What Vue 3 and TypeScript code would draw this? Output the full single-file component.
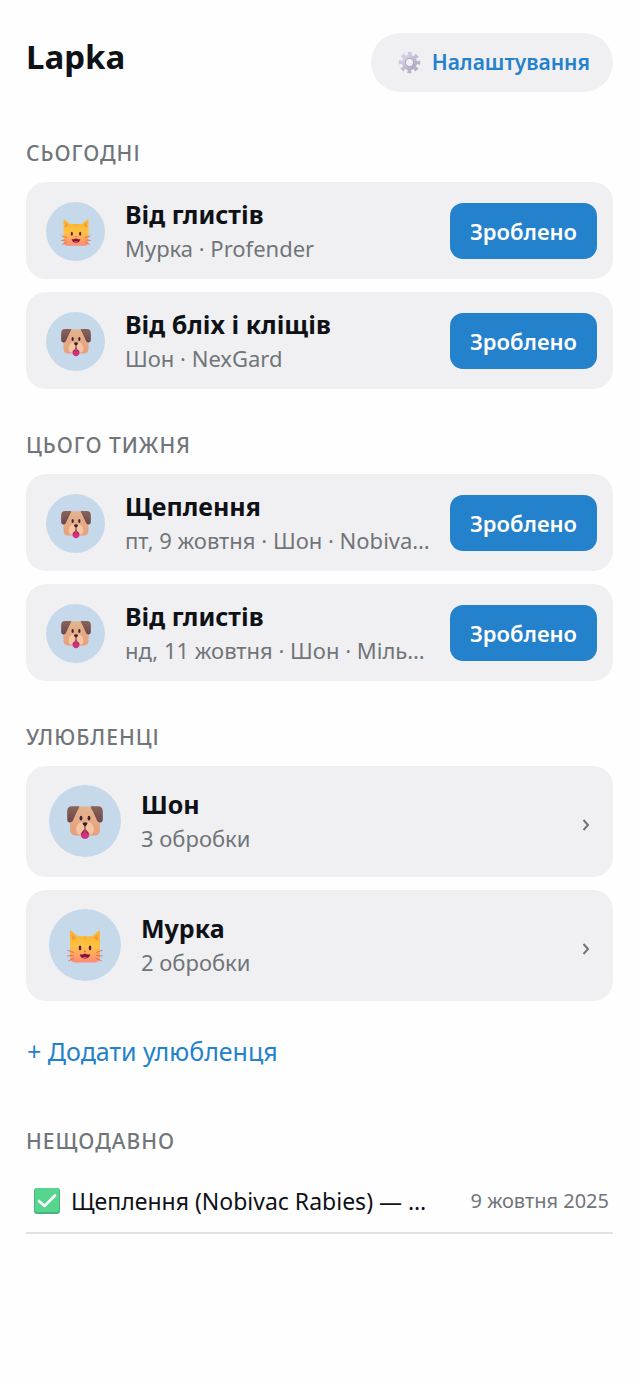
<script setup lang="ts">
type Species = 'cat' | 'dog'

interface Task {
  id: number
  species: Species
  title: string
  details: string
}

interface TaskGroup {
  id: string
  heading: string
  tasks: Task[]
}

interface Pet {
  id: number
  species: Species
  name: string
  summary: string
}

const groups: TaskGroup[] = [
  {
    id: 'today',
    heading: 'Сьогодні',
    tasks: [
      { id: 1, species: 'cat', title: 'Від глистів', details: 'Мурка · Profender' },
      { id: 2, species: 'dog', title: 'Від бліх і кліщів', details: 'Шон · NexGard' },
    ],
  },
  {
    id: 'week',
    heading: 'Цього тижня',
    tasks: [
      { id: 3, species: 'dog', title: 'Щеплення', details: 'пт, 9 жовтня · Шон · Nobivac Rabies' },
      { id: 4, species: 'dog', title: 'Від глистів', details: 'нд, 11 жовтня · Шон · Мільпразон' },
    ],
  },
]

const pets: Pet[] = [
  { id: 1, species: 'dog', name: 'Шон', summary: '3 обробки' },
  { id: 2, species: 'cat', name: 'Мурка', summary: '2 обробки' },
]
</script>

<template>
  <main class="page">
    <svg class="sprites" aria-hidden="true">
      <defs>
        <linearGradient id="catFur" x1="0" y1="0" x2="0" y2="1">
          <stop offset="0" stop-color="#fbb52c" />
          <stop offset="0.5" stop-color="#fec044" />
          <stop offset="1" stop-color="#ff8a78" />
        </linearGradient>
        <linearGradient id="dogFur" x1="0" y1="0" x2="0" y2="1">
          <stop offset="0" stop-color="#e3b48e" />
          <stop offset="1" stop-color="#e5a07c" />
        </linearGradient>
        <linearGradient id="dogEar" x1="0" y1="0" x2="0" y2="1">
          <stop offset="0" stop-color="#8a6458" />
          <stop offset="1" stop-color="#6b474c" />
        </linearGradient>
        <linearGradient id="gearMetal" x1="0" y1="0" x2="1" y2="1">
          <stop offset="0" stop-color="#d9d2e6" />
          <stop offset="1" stop-color="#b3a6c5" />
        </linearGradient>
        <symbol id="cat" viewBox="0 0 36 36">
          <path d="M3 2.6Q3.2 1 4.6 2L11 7.2H25L31.4 2Q32.8 1 33 2.6V28.5Q33 33.4 28 33.4H8Q3 33.4 3 28.5Z" fill="url(#catFur)" />
          <path d="M4.8 5L9.4 8.8L4.8 12ZM31.2 5L26.6 8.8L31.2 12Z" fill="#f69a3a" />
          <path d="M15.4 7.2H20.6L18 11.6Z" fill="#f4a329" opacity="0.4" />
          <ellipse cx="13" cy="19" rx="1.3" ry="2.4" fill="#4b2838" />
          <ellipse cx="23" cy="19" rx="1.3" ry="2.4" fill="#4b2838" />
          <path d="M16.6 21.8H19.4L18 23.2Z" fill="#ef496c" />
          <path d="M12.8 25.2Q15.4 26 18 24.6Q20.6 26 23.2 25.2Q22.6 29.6 18 29.6T12.8 25.2Z" fill="#7a183c" />
          <path d="M15.4 28.4Q18 27 20.6 28.4Q18 30.2 15.4 28.4Z" fill="#ef3f63" />
          <path d="M0.8 21.4L6.5 23.4M0.6 27L6.5 26.4M1.6 31.8L7 29.2M35.2 21.4L29.5 23.4M35.4 27L29.5 26.4M34.4 31.8L29 29.2" fill="none" stroke="#c9685a" stroke-width="0.8" stroke-linecap="round" />
        </symbol>
        <symbol id="dog" viewBox="0 0 36 36">
          <path d="M8 1.4H28L33 10V24.5Q33 30.6 27 30.6H9Q3 30.6 3 24.5V10Z" fill="url(#dogFur)" />
          <path d="M5 1.2H12.4Q12 3.4 10 6.6L6.6 14Q5.6 17.4 3 17.4Q0.2 17.4 0.2 14.4V6.4Q0.2 1.2 5 1.2Z" fill="url(#dogEar)" />
          <path d="M31 1.2H23.6Q24 3.4 26 6.6L29.4 14Q30.4 17.4 33 17.4Q35.8 17.4 35.8 14.4V6.4Q35.8 1.2 31 1.2Z" fill="url(#dogEar)" />
          <path d="M18 17Q23 15.8 26 20.4Q29 29.6 22 29.8Q19 29.8 18 27.6Q17 29.8 14 29.8Q7 29.6 10 20.4Q13 15.8 18 17Z" fill="#f6c4a2" />
          <ellipse cx="14" cy="13.2" rx="1.4" ry="2.4" fill="#422534" />
          <ellipse cx="22" cy="13.2" rx="1.4" ry="2.4" fill="#422534" />
          <path d="M13.8 28.4Q15.4 25.4 18 26Q20.6 25.4 22.2 28.4V30.4Q21.4 33.8 18 33.8T13.8 30.4Z" fill="#d2307f" />
          <path d="M15.4 17.8Q18 16.6 20.6 17.8Q20.4 20 18 21.4Q15.6 20 15.4 17.8Z" fill="#3c1f2c" />
          <path d="M18 21V25M18 24.6Q16.6 25.4 15 28.2M18 24.6Q19.4 25.4 21 28.2" fill="none" stroke="#6b2a3a" stroke-width="1.1" stroke-linecap="round" />
        </symbol>
        <symbol id="gear" viewBox="0 0 24 24">
          <g fill="none" stroke="url(#gearMetal)">
            <circle cx="12" cy="12" r="5.9" stroke-width="4.2" />
            <circle cx="12" cy="12" r="9.4" stroke-width="3.6" stroke-dasharray="4 3.38" stroke-dashoffset="2" />
          </g>
          <circle cx="12" cy="12" r="4.2" fill="none" stroke="#aa9dbc" stroke-width="0.8" />
        </symbol>
      </defs>
    </svg>

    <header class="header">
      <h1 class="brand">Lapka</h1>
      <button class="settings" type="button">
        <svg class="gear" aria-hidden="true"><use href="#gear" /></svg>
        <span>Налаштування</span>
      </button>
    </header>

    <section v-for="group in groups" :key="group.id" class="section">
      <h2 class="heading">{{ group.heading }}</h2>
      <ul class="list">
        <li v-for="task in group.tasks" :key="task.id" class="card task">
          <span class="avatar">
            <svg class="face" aria-hidden="true"><use :href="`#${task.species}`" /></svg>
          </span>
          <div class="info">
            <h3 class="title">{{ task.title }}</h3>
            <p class="details">{{ task.details }}</p>
          </div>
          <button class="done" type="button">Зроблено</button>
        </li>
      </ul>
    </section>

    <section class="section">
      <h2 class="heading">Улюбленці</h2>
      <ul class="list">
        <li v-for="pet in pets" :key="pet.id">
          <a class="card pet" href="#">
            <span class="avatar large">
              <svg class="face" aria-hidden="true"><use :href="`#${pet.species}`" /></svg>
            </span>
            <span class="info">
              <span class="title">{{ pet.name }}</span>
              <span class="details">{{ pet.summary }}</span>
            </span>
            <svg class="chevron" viewBox="0 0 8 12" aria-hidden="true">
              <path d="M1.5 1L6 6L1.5 11" />
            </svg>
          </a>
        </li>
      </ul>
      <button class="add" type="button">+ Додати улюбленця</button>
    </section>

    <section class="section recent">
      <h2 class="heading">Нещодавно</h2>
      <ul class="history">
        <li class="entry">
          <svg class="check" viewBox="0 0 26 26" aria-hidden="true">
            <rect width="26" height="26" rx="3" fill="#48b57b" />
            <rect x="1" width="24" height="24" rx="2" fill="#55d58d" />
            <path d="M5 13L10.5 18L21 7.5" fill="none" stroke="#fff" stroke-width="2.6" stroke-linecap="round" stroke-linejoin="round" />
          </svg>
          <span class="entry-title">Щеплення (Nobivac Rabies) — Шон</span>
          <time class="entry-date" datetime="2025-10-09">9 жовтня 2025</time>
        </li>
      </ul>
    </section>
  </main>
</template>

<style>
body {
  background: #fefefe;
}
</style>

<style scoped>
.page {
  padding: 33px 27px 32px 26px;
  color: #0e1116;
  font-family: "Noto Sans", "Open Sans", sans-serif;
  font-size: 23px;
}

.page * {
  box-sizing: border-box;
}

.sprites {
  position: absolute;
  width: 0;
  height: 0;
}

h1,
h2,
h3,
p,
ul {
  margin: 0;
  padding: 0;
  list-style: none;
}

button {
  border: 0;
  font-family: inherit;
  cursor: pointer;
}

.header {
  display: flex;
  justify-content: space-between;
  align-items: flex-start;
}

.brand {
  font-size: 33px;
  line-height: 48px;
  font-weight: 700;
}

.settings {
  display: flex;
  align-items: center;
  gap: 11px;
  padding: 13px 23px 13px 27px;
  border-radius: 30px;
  background: #f0f0f2;
  color: #2481cc;
  font-size: 21px;
  line-height: 33px;
  font-weight: 600;
}

.gear {
  width: 23px;
  height: 23px;
}

.section {
  padding-top: 44px;
}

.section + .section {
  padding-top: 39px;
}

.section + .recent {
  padding-top: 55px;
}

.heading {
  padding-bottom: 12px;
  color: #707579;
  font-size: 21px;
  line-height: 34px;
  font-weight: 500;
  letter-spacing: 1px;
  text-transform: uppercase;
}

.list {
  display: flex;
  flex-direction: column;
  gap: 13px;
}

.card {
  display: flex;
  align-items: center;
  gap: 20px;
  border-radius: 20px;
  background: #f0f0f3;
  color: inherit;
  text-decoration: none;
}

.task {
  padding: 15px 16px 14px 20px;
}

.pet {
  padding: 19px 23px 20px;
}

.avatar {
  display: flex;
  flex: none;
  align-items: center;
  justify-content: center;
  width: 59px;
  height: 59px;
  padding-top: 4px;
  border-radius: 50%;
  background: #c5d9eb;
}

.avatar.large {
  width: 72px;
  height: 72px;
}

.face {
  width: 30px;
  height: 30px;
}

.large .face {
  width: 36px;
  height: 36px;
}

.info {
  display: flex;
  flex: 1;
  flex-direction: column;
  min-width: 0;
}

.title {
  font-size: 25px;
  line-height: 34px;
  font-weight: 700;
}

.details {
  overflow: hidden;
  color: #707579;
  font-size: 22px;
  line-height: 34px;
  text-overflow: ellipsis;
  white-space: nowrap;
}

.done {
  flex: none;
  padding: 11px 20px;
  border-radius: 13px;
  background: #2481cc;
  color: #fff;
  font-size: 22px;
  line-height: 34px;
  font-weight: 600;
}

.chevron {
  flex: none;
  width: 8px;
  height: 12px;
  margin-top: 8px;
}

.chevron path {
  fill: none;
  stroke: #707579;
  stroke-width: 2;
}

.add {
  display: block;
  margin-top: 32px;
  padding: 0 1px;
  background: none;
  color: #2481cc;
  font-size: 25px;
  line-height: 36px;
}

.entry {
  display: flex;
  align-items: center;
  gap: 11px;
  padding: 13px 4px 13px 8px;
  border-bottom: 2px solid #e2e2e4;
}

.check {
  flex: none;
  width: 26px;
  height: 26px;
}

.entry-title {
  flex: 1;
  min-width: 0;
  overflow: hidden;
  font-size: 23px;
  line-height: 36px;
  text-overflow: ellipsis;
  white-space: nowrap;
}

.entry-date {
  flex: none;
  padding-left: 18px;
  color: #707579;
  font-size: 20px;
  line-height: 36px;
}
</style>
